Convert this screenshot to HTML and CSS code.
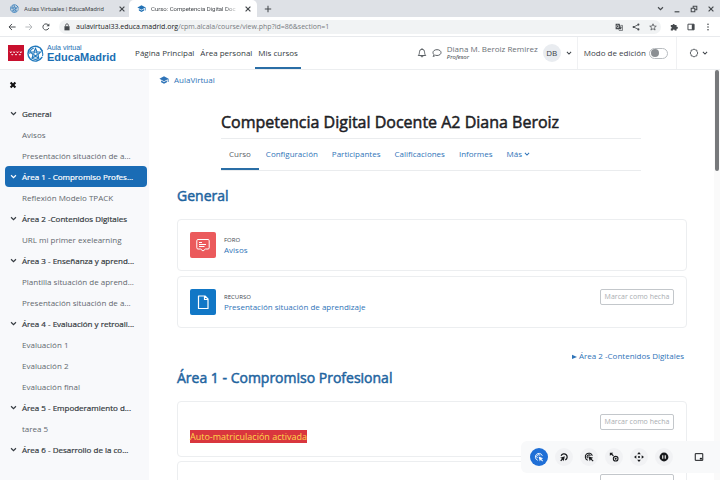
FILE: index.html
```
<!DOCTYPE html>
<html lang="es">
<head>
<meta charset="utf-8">
<meta name="viewport" content="width=device-width, initial-scale=1">
<title>Curso: Competencia Digital Docente A2 Diana Beroiz</title>
<link rel="stylesheet" href="styles.css">
</head>
<body>
<svg class="defs" aria-hidden="true">
  <symbol id="chev" viewBox="0 0 10 10"><path d="M1.500 3.200 5 6.700 8.500 3.200" fill="none" stroke="currentColor" stroke-width="1.700"/></symbol>
  <symbol id="close" viewBox="0 0 10 10"><path d="M2 2 8 8M8 2 2 8" stroke="currentColor" stroke-width="1.500"/></symbol>
  <symbol id="cap" viewBox="0 0 24 24"><path d="M12 3 1 9l11 6 9-4.900V17h2V9zM5 13.200v4L12 21l7-3.800v-4L12 17z" fill="currentColor"/></symbol>
  <symbol id="swirl" viewBox="0 0 24 24"><g fill="none" stroke="currentColor" stroke-linecap="round"><path d="M21.500 8A10.500 10.500 0 1 0 21 17.500" stroke-width="2"/><path d="M19 5.500A10 10 0 0 1 22 15M4 12a8 8 0 0 1 5-7.300M16 19a8 8 0 0 1-9-.5" stroke-width="1.500"/><path d="m12 5 2 4.500 5 .5-3.500 3.500 1 5-4.500-2.500L7.500 18l1-4.500L5 10l5-.5z" stroke-width="1.700"/><circle cx="12" cy="12.500" r="2.500" stroke-width="1.500"/></g></symbol>
</svg>

<div class="tabs">
  <div class="tab"><svg class="fav"><use href="#swirl"/></svg><span class="tab-name">Aulas Virtuales | EducaMadrid</span><button class="icon-btn" aria-label="Cerrar pestaña"><svg class="i8"><use href="#close"/></svg></button></div>
  <div class="tab current"><svg class="fav"><use href="#cap"/></svg><span class="tab-name fade">Curso: Competencia Digital Doc</span><button class="icon-btn" aria-label="Cerrar pestaña"><svg class="i8"><use href="#close"/></svg></button></div>
  <button class="icon-btn new-tab" aria-label="Nueva pestaña"><svg class="i8" viewBox="0 0 10 10"><path d="M5 1v8M1 5h8" stroke="currentColor" stroke-width="1.300"/></svg></button>
  <div class="window-btns">
    <button class="icon-btn" aria-label="Buscar pestañas"><svg class="i7"><use href="#chev"/></svg></button>
    <button class="icon-btn" aria-label="Minimizar"><svg class="i8" viewBox="0 0 10 10"><path d="M2 8.500h6" stroke="currentColor" stroke-width="1.500"/></svg></button>
    <button class="icon-btn" aria-label="Restaurar"><svg class="i8" viewBox="0 0 10 10"><path d="M1.500 4h4.500v4.500h-4.500zM4 4V1.500h4.500V6H6" fill="none" stroke="currentColor" stroke-width="1.300"/></svg></button>
    <button class="icon-btn" aria-label="Cerrar"><svg class="i8"><use href="#close"/></svg></button>
  </div>
</div>

<div class="address">
  <button class="icon-btn" aria-label="Atrás"><svg class="i8" viewBox="0 0 10 10"><path d="M9.500 5H1.500M5 1.200 1.200 5 5 8.800" fill="none" stroke="currentColor" stroke-width="1.200"/></svg></button>
  <button class="icon-btn dim" aria-label="Adelante"><svg class="i8" viewBox="0 0 10 10"><path d="M.5 5h8M5 1.200 8.800 5 5 8.800" fill="none" stroke="currentColor" stroke-width="1.200"/></svg></button>
  <button class="icon-btn" aria-label="Recargar"><svg class="i8" viewBox="0 0 10 10"><path d="M8.500 6.300A3.800 3.800 0 1 1 7.900 2.500" fill="none" stroke="currentColor" stroke-width="1.200"/><path d="M9.200.5v3.700H5.500z" fill="currentColor"/></svg></button>
  <div class="url">
    <svg class="i8" viewBox="0 0 10 10"><path d="M1.800 4h6.400v5.200H1.800z" fill="currentColor"/><path d="M3.300 4V2.700a1.700 1.700 0 0 1 3.400 0V4" fill="none" stroke="currentColor" stroke-width="1"/></svg>
    <span class="url-text"><b>aulavirtual33.educa.madrid.org</b>/cpm.alcala/course/view.php?id=86&amp;section=1</span>
    <div class="url-actions">
      <button class="icon-btn" aria-label="Traducir"><svg class="i8" viewBox="0 0 10 10"><path d="M.8.800h5l2.200 7H.8z" fill="currentColor"/><path d="M7 3h2.400v6.300H5.200L4.500 8" fill="none" stroke="currentColor" stroke-width=".8"/><path d="M4.800 3.400A1.600 1.600 0 1 0 5 4.600H3.700" fill="none" stroke="#fff" stroke-width=".7"/><path d="M7 5h2M8.500 5 7 7.500" stroke="currentColor" stroke-width=".6"/></svg></button>
      <button class="icon-btn" aria-label="Compartir"><svg class="i8" viewBox="0 0 10 10"><path d="M8 2 2 5l6 3" fill="none" stroke="currentColor"/><g fill="currentColor"><circle cx="8" cy="2" r="1.300"/><circle cx="2" cy="5" r="1.300"/><circle cx="8" cy="8" r="1.300"/></g></svg></button>
      <button class="icon-btn" aria-label="Añadir a marcadores"><svg class="i8" viewBox="0 0 10 10"><path d="m5 1 1.100 2.800 3 .2-2.300 1.900.8 2.900L5 7.200 2.400 8.800l.8-2.900L.9 4l3-.2z" fill="none" stroke="currentColor" stroke-width=".9"/></svg></button>
    </div>
  </div>
  <button class="icon-btn" aria-label="Extensiones"><svg class="i8" viewBox="0 0 10 10"><path d="M1 2.500h2.300a1.300 1.300 0 1 1 2.600 0h2.300v2.300a1.300 1.300 0 1 1 0 2.500v2H6a1.200 1.200 0 1 0-2.400 0H1V7a1.200 1.200 0 1 0 0-2.400z" fill="currentColor"/></svg></button>
  <button class="icon-btn" aria-label="Panel lateral"><svg class="i8" viewBox="0 0 10 10"><path d="M1.200 1.500h7.600v7H1.200z" fill="none" stroke="currentColor" stroke-width="1.200"/><path d="M6 1.500h3v7H6z" fill="currentColor"/></svg></button>
  <button class="icon-btn" aria-label="Menú"><svg class="i8" viewBox="0 0 10 10"><g fill="currentColor"><circle cx="5" cy="1.500" r="1"/><circle cx="5" cy="5" r="1"/><circle cx="5" cy="8.500" r="1"/></g></svg></button>
</div>

<header class="site">
  <a class="brand" href="#">
    <svg class="flag" viewBox="0 0 16 16"><path d="M0 0h16v16H0z" fill="#c8102e"/><g fill="none" stroke="#fff" stroke-width=".8"><path d="m2 6.500.8 1.500.8-1.500M5.300 6.500l.8 1.500.8-1.500M8.700 6.500l.8 1.500.8-1.500M12 6.500l.8 1.500.8-1.500M3.500 9l.8 1.200L5 9M7.200 9l.8 1.200L8.800 9M11 9l.8 1.200.8-1.200"/></g></svg>
    <svg class="swirl"><use href="#swirl"/></svg>
    <span class="brand-text"><span class="brand-top">Aula virtual</span><span class="brand-name">EducaMadrid</span></span>
  </a>
  <nav class="main-nav">
    <a href="#">Página Principal</a>
    <a href="#">Área personal</a>
    <a href="#" class="on">Mis cursos</a>
  </nav>
  <div class="tools">
    <button class="icon-btn" aria-label="Notificaciones"><svg class="i10" viewBox="0 0 12 12"><path d="M1.500 9h9C9 7.500 9.300 6 9 4.500a3 3 0 0 0-6 0C2.700 6 3 7.500 1.500 9zM4.800 9.500a1.200 1.200 0 0 0 2.400 0M6 1.500V.3" fill="none" stroke="currentColor" stroke-width="1"/></svg></button>
    <button class="icon-btn" aria-label="Mensajes"><svg class="i10" viewBox="0 0 12 12"><path d="M6 2c2.800 0 4.800 1.500 4.800 3.500S8.800 9 6 9c-.7 0-1.300-.1-1.800-.3C3.300 9.400 2.500 10 1.200 10c.7-.7 1-1.400 1.100-2.200C1.600 7.200 1.200 6.400 1.200 5.500 1.200 3.500 3.200 2 6 2z" fill="none" stroke="currentColor" stroke-width="1"/></svg></button>
    <div class="user"><span class="user-name">Diana M. Beroiz Remirez</span><em>Profesor</em></div>
    <button class="icon-btn account" aria-label="Menú de usuario"><span class="avatar">DB</span><svg class="i6"><use href="#chev"/></svg></button>
  </div>
  <label class="edit">Modo de edición<input type="checkbox" class="switch"></label>
  <button class="icon-btn mode" aria-label="Tema"><svg class="i10" viewBox="0 0 12 12"><path d="m6 1.200 1.500 1 1.800.300.300 1.800 1 1.700-1 1.700-.3 1.800-1.800.3-1.500 1-1.500-1-1.800-.3-.3-1.800-1-1.700 1-1.700.3-1.800 1.800-.3z" fill="none" stroke="currentColor" stroke-width="1"/></svg><svg class="i6"><use href="#chev"/></svg></button>
</header>

<div class="page">
  <aside class="sidebar">
    <button class="icon-btn drawer-close" aria-label="Cerrar índice"><svg class="i8" viewBox="0 0 10 10"><path d="M2 2 8 8M8 2 2 8" stroke="currentColor" stroke-width="2.600"/></svg></button>
    <nav class="index">
      <a href="#" class="sec"><svg class="i7"><use href="#chev"/></svg>General</a>
      <a href="#">Avisos</a>
      <a href="#">Presentación situación de a...</a>
      <a href="#" class="sec active"><svg class="i7"><use href="#chev"/></svg>Área 1 - Compromiso Profes...</a>
      <a href="#">Reflexión Modelo TPACK</a>
      <a href="#" class="sec"><svg class="i7"><use href="#chev"/></svg>Área 2 -Contenidos Digitales</a>
      <a href="#">URL mi primer exelearning</a>
      <a href="#" class="sec"><svg class="i7"><use href="#chev"/></svg>Área 3 - Enseñanza y aprend...</a>
      <a href="#">Plantilla situación de aprend...</a>
      <a href="#">Presentación situación de a...</a>
      <a href="#" class="sec"><svg class="i7"><use href="#chev"/></svg>Área 4 - Evaluación y retroali...</a>
      <a href="#">Evaluación 1</a>
      <a href="#">Evaluación 2</a>
      <a href="#">Evaluación final</a>
      <a href="#" class="sec"><svg class="i7"><use href="#chev"/></svg>Área 5 - Empoderamiento d...</a>
      <a href="#">tarea 5</a>
      <a href="#" class="sec"><svg class="i7"><use href="#chev"/></svg>Área 6 - Desarrollo de la co...</a>
    </nav>
  </aside>

  <main class="content">
    <a class="crumb" href="#"><svg class="i10"><use href="#cap"/></svg>AulaVirtual</a>
    <div class="course-head">
      <h1>Competencia Digital Docente A2 Diana Beroiz</h1>
      <nav class="course-nav">
        <a href="#" class="on">Curso</a>
        <a href="#">Configuración</a>
        <a href="#">Participantes</a>
        <a href="#">Calificaciones</a>
        <a href="#">Informes</a>
        <a href="#">Más <svg class="i6"><use href="#chev"/></svg></a>
      </nav>
    </div>
    <section class="topic">
      <h2>General</h2>
      <article class="card">
        <svg class="act" viewBox="0 0 26 26"><rect width="26" height="26" rx="2" fill="#eb5a5c"/><g fill="none" stroke="#fff" stroke-width="1"><path d="M8 7.500h10a1.200 1.200 0 0 1 1.200 1.200v7.100A1.200 1.200 0 0 1 18 17h-2.500L13 19l-2.500-2H8a1.200 1.200 0 0 1-1.200-1.200V8.700A1.200 1.200 0 0 1 8 7.500z"/><path d="M9 10.500h3M9 12.500h7M9 14.500h5.500"/></g></svg>
        <div class="act-text"><span class="kind">FORO</span><a href="#">Avisos</a></div>
      </article>
      <article class="card">
        <svg class="act" viewBox="0 0 26 26"><rect width="26" height="26" rx="2" fill="#1177c6"/><path d="M8.500 7h6.500l3 3v9.500H8.500zM14.500 7v3.500H18" fill="none" stroke="#fff" stroke-width="1.200" stroke-linejoin="round"/></svg>
        <div class="act-text"><span class="kind">RECURSO</span><a href="#">Presentación situación de aprendizaje</a></div>
        <button class="done">Marcar como hecha</button>
      </article>
      <a class="next" href="#"><svg class="arrow" viewBox="0 0 6 6"><path d="M0 1 6 3.500 0 6z" fill="currentColor"/></svg>Área 2 -Contenidos Digitales</a>
    </section>
    <section class="topic">
      <h2>Área 1 - Compromiso Profesional</h2>
      <article class="card note">
        <mark>Auto-matriculación activada</mark>
        <button class="done">Marcar como hecha</button>
      </article>
      <article class="card note">
        <button class="done" aria-label="Marcar como hecha"></button>
      </article>
    </section>
    <div class="track"><div class="thumb"></div></div>
  </main>
</div>

<div class="pen-bar">
  <button class="round chosen" aria-label="Clic izquierdo"><svg viewBox="0 0 12 12"><path d="M4.500 10A4.300 4.300 0 1 1 10 4.500M4.300 7.300A2.200 2.200 0 1 1 7.500 4.500" fill="none" stroke="currentColor" stroke-width="1.100"/><path d="m5.500 5.500 5.500 2-2.200 1 2 2-.8.800-2-2-1 2z" fill="currentColor"/></svg></button>
  <button class="round" aria-label="Clic derecho"><svg viewBox="0 0 12 12"><path d="M2.500 4.500A3.800 3.800 0 1 1 7.500 9.500" fill="none" stroke="currentColor" stroke-width="1.500"/><path d="M7 5 1.500 7l2 1-2 2.200 1 1 2.200-2 1 2z" fill="currentColor"/></svg></button>
  <button class="round" aria-label="Doble clic"><svg viewBox="0 0 12 12"><path d="M4.500 9.800A4.300 4.300 0 1 1 10 4.500M4.300 7.500A2.300 2.300 0 1 1 7.800 4.300" fill="none" stroke="currentColor" stroke-width="1.300"/><path d="m5 5 6 2-2 1 2.500 2.500-1 1L8 9l-1 2z" fill="currentColor"/></svg></button>
  <button class="round" aria-label="Arrastrar"><svg viewBox="0 0 12 12"><path d="M1 1h4L3.800 2.200l2 2-1 1-2-2L1 4.500z" fill="currentColor"/><circle cx="8" cy="8" r="2.800" fill="none" stroke="currentColor" stroke-width="1.300"/><circle cx="8" cy="8" r="1.200" fill="currentColor"/></svg></button>
  <button class="round" aria-label="Desplazar"><svg viewBox="0 0 12 12"><path d="m6 0 2.200 2.800H3.800zM6 12l2.200-2.800H3.800zM0 6l2.800-2.200v4.400zM12 6 9.200 3.800v4.400z" fill="currentColor"/><circle cx="6" cy="6" r="1.300" fill="currentColor"/></svg></button>
  <button class="round" aria-label="Pausar"><svg viewBox="0 0 12 12"><circle cx="6" cy="6" r="5.300" fill="currentColor"/><path d="M4.500 3.800v4.400M7.500 3.800v4.400" stroke="#fff" stroke-width="1.300"/></svg></button>
  <button class="round corner" aria-label="Posición"><svg viewBox="0 0 12 12"><path d="M1.500 2h9v8h-9z" fill="none" stroke="currentColor" stroke-width="1.200"/><path d="M7 7h2.500v2H7z" fill="currentColor"/></svg></button>
</div>
</body>
</html>
```
FILE: styles.css
```
* { box-sizing: border-box; }
body {
  margin: 0;
  height: 100vh;
  overflow: hidden;
  display: flex;
  flex-direction: column;
  background: #fff;
  color: #3c4248;
  font: 8px/10px "Open Sans", "Noto Sans", sans-serif;
}
a { color: #2f74b8; text-decoration: none; }
svg { display: block; flex: none; }
button { font: inherit; color: inherit; }
.defs { position: absolute; width: 0; height: 0; }
.icon-btn { display: flex; align-items: center; padding: 0; border: 0; background: none; }
.i6 { width: 6px; height: 6px; }
.i7 { width: 7px; height: 7px; }
.i8 { width: 8px; height: 8px; }
.i10 { width: 10px; height: 10px; }

/* Browser frame */
.tabs, .address { flex: none; display: flex; align-items: center; color: #45494d; }
.tabs { height: 17px; background: #dee1e6; font-family: Roboto, sans-serif; font-size: 6px; }
.tab { display: flex; align-items: center; gap: 5px; width: 129px; height: 17px; padding: 0 3px 0 10px; }
.tab.current { width: 128px; padding: 0 5px 0 8px; background: #fff; border-radius: 5px 5px 0 0; }
.fav { width: 9px; height: 9px; color: #2272b5; }
.tab-name { flex: 1; min-width: 0; overflow: hidden; white-space: nowrap; }
.fade { mask-image: linear-gradient(90deg, #000 85%, transparent); }
.new-tab { margin-left: 7px; }
.window-btns { display: flex; gap: 9px; margin: 0 5px 0 auto; }
.address { height: 20px; gap: 9px; padding: 0 8px; border-bottom: 1px solid #e8eaed; }
.dim { color: #b4b7ba; }
.url { flex: 1; min-width: 0; display: flex; align-items: center; gap: 5px; height: 14px; padding: 0 4px; border-radius: 7px; background: #f1f3f4; }
.url-text { flex: 1; min-width: 0; overflow: hidden; white-space: nowrap; font-size: 7px; color: #777b7f; }
.url-text b { font-weight: 400; color: #202124; }
.url-actions { display: flex; gap: 9px; }

/* Site header */
.site { flex: none; display: flex; align-items: stretch; height: 33px; padding-left: 8px; border-bottom: 1px solid #eceef0; background: #fff; }
.brand { display: flex; align-items: center; gap: 3px; }
.flag { width: 16px; height: 16px; }
.swirl { width: 17px; height: 17px; color: #2179bd; }
.brand-text { display: flex; flex-direction: column; font-family: "Liberation Sans", sans-serif; color: #1b6fb3; }
.brand-top { font-size: 7px; line-height: 8px; }
.brand-name { font-size: 11px; line-height: 11px; font-weight: 700; }
.main-nav { display: flex; margin-left: 16px; }
.main-nav a { display: flex; align-items: center; padding: 2px 3px 0; border-bottom: 2px solid transparent; color: #333a40; white-space: nowrap; }
.main-nav a.on { border-color: #2a6ea6; }
.tools { display: flex; align-items: center; gap: 5px; margin-left: auto; padding-right: 5px; border-right: 1px solid #f0f1f3; }
.user { display: flex; flex-direction: column; white-space: nowrap; color: #6a7076; line-height: 9px; }
.user em { color: #33383d; font-size: 6px; }
.account { gap: 5px; }
.avatar { width: 18px; height: 18px; border-radius: 50%; background: #e9ecf0; line-height: 18px; text-align: center; }
.edit { display: flex; align-items: center; gap: 3px; padding: 0 8px 0 6px; border-right: 1px solid #f0f1f3; white-space: nowrap; }
.switch { appearance: none; display: flex; align-items: center; width: 19px; height: 11px; margin: 0; padding: 0 1px; border: 1px solid #b8bcc0; border-radius: 6px; }
.switch::before { content: ""; width: 8px; height: 8px; border-radius: 50%; background: #8b8f93; }
.mode { gap: 3px; padding: 0 12px; }

/* Course index */
.page { flex: 1; min-height: 0; display: flex; }
.sidebar { flex: none; width: 149px; padding: 10px 2px 0 5px; background: #f8f9fb; overflow: hidden; }
.drawer-close { height: 10px; margin: 0 0 13px 4px; color: #111; }
.index { display: flex; flex-direction: column; }
.index a { display: flex; align-items: center; gap: 5px; height: 21px; padding-left: 17px; border-radius: 4px; color: #62686e; white-space: nowrap; }
.index .sec { padding-left: 5px; color: #343a40; -webkit-text-stroke: 0.2px currentColor; }
.index .active { background: #1a6cb5; color: #fff; }

/* Course content */
.content { position: relative; flex: 1; min-width: 0; overflow: hidden; padding: 5px 33px 0 28px; }
.crumb { display: flex; align-items: center; gap: 5px; margin-left: -18px; height: 10px; }
.course-head { margin: 28px 46px 0 44px; }
h1, h2 { margin: 0; font-weight: 400; -webkit-text-stroke: 0.5px currentColor; }
h1 { font-size: 16px; line-height: 18px; color: #1d2125; white-space: nowrap; }
.course-nav { display: flex; height: 33px; margin-top: 7px; border-top: 1px solid #eaecee; border-bottom: 1px solid #eaecee; }
.course-nav a { display: flex; align-items: center; gap: 2px; padding: 0 7px; border-bottom: 2px solid transparent; white-space: nowrap; }
.course-nav a.on { padding: 0 8px; color: #5b6268; border-color: #2a6ea6; }
h2 { margin-bottom: 13px; font-size: 14px; line-height: 20px; color: #1f659f; }
.topic { display: flex; flex-direction: column; margin-top: 15px; }
.card { display: flex; align-items: center; gap: 8px; height: 52px; margin-bottom: 5px; padding: 0 12px; border: 1px solid #eceef0; border-radius: 4px; }
.act { width: 26px; height: 26px; }
.act-text { display: flex; flex-direction: column; }
.kind { font-size: 6px; color: #43494f; }
.done { align-self: flex-start; width: 74px; height: 16px; margin: 12px 0 0 auto; padding: 0; border: 1px solid #c3c7cb; border-radius: 2px; background: #fff; color: #a9adb1; font-size: 7px; }
.next { display: flex; align-items: center; gap: 2px; align-self: flex-end; margin: 18px 3px 0 0; }
.arrow { width: 5px; height: 5px; }
.topic + .topic { margin-top: 7px; }
.note { height: 56px; margin-bottom: 4px; }
mark { margin-top: 14px; background: #d9363e; color: #ffd84a; font-size: 9px; line-height: 13px; }
.track { position: absolute; top: 0; right: 0; width: 6px; height: 100%; background: #fafafa; }
.thumb { width: 4px; height: 101px; margin-left: 1px; border-radius: 2px; background: #77797b; }

/* Floating click-assist bar */
.pen-bar { position: fixed; right: 0; bottom: 7px; display: flex; align-items: center; gap: 7px; height: 32px; padding: 0 12px 0 9px; border-radius: 6px 0 0 6px; background: #f8f9fa; color: #17191c; }
.round { display: grid; place-items: center; width: 18px; height: 18px; padding: 0; border: 0; border-radius: 50%; background: #f1f2f4; }
.round svg { width: 10px; height: 10px; }
.chosen { background: #1f6fd6; color: #fff; }
.corner { margin-left: 10px; background: none; }
```
